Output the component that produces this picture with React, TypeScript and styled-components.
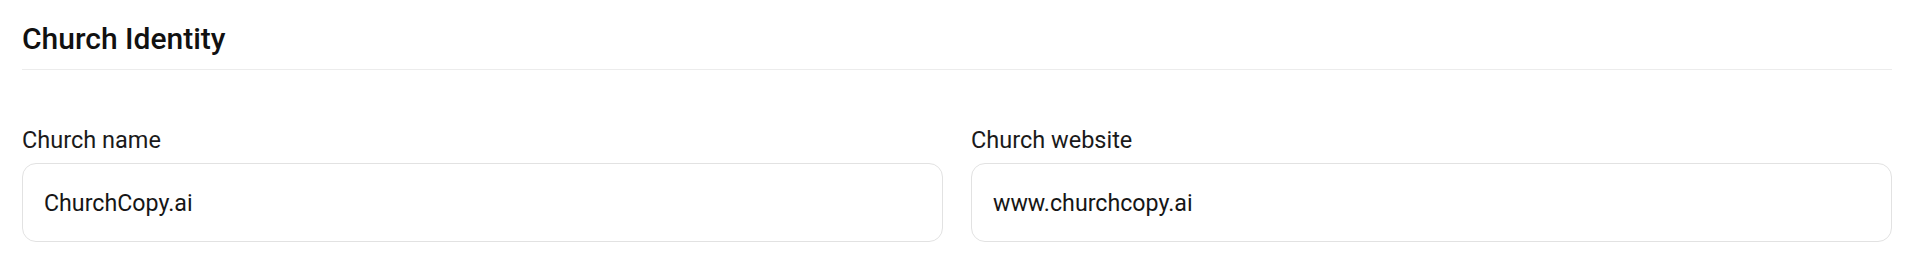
import React from 'react';
import styled, { createGlobalStyle } from 'styled-components';

const GlobalStyle = createGlobalStyle`
  body {
    margin: 0;
    background: #ffffff;
    font-family: Roboto, "Noto Sans", Arial, sans-serif;
    color: #141414;
  }
`;

const Section = styled.section`
  padding: 21px 28px 24px 22px;
`;

const SectionHeader = styled.div`
  padding-bottom: 12px;
  border-bottom: 1px solid #ececec;
`;

const SectionTitle = styled.h2`
  margin: 0;
  font-size: 30px;
  line-height: 36px;
  font-weight: 500;
  color: #111111;
`;

const FieldGrid = styled.div`
  display: grid;
  grid-template-columns: 1fr 1fr;
  column-gap: 28px;
  margin-top: 56px;
`;

const Field = styled.label`
  display: flex;
  flex-direction: column;
  gap: 9px;
`;

const FieldLabel = styled.span`
  font-size: 23.5px;
  line-height: 28px;
  font-weight: 400;
  color: #1a1a1a;
`;

const TextInput = styled.input`
  box-sizing: border-box;
  width: 100%;
  height: 79px;
  padding: 0 21px;
  border: 1px solid #e2e2e2;
  border-radius: 14px;
  background: #ffffff;
  font-family: inherit;
  font-size: 23.2px;
  color: #161616;
  outline: none;
`;

interface FieldProps {
  label: string;
  value: string;
}

const InputField: React.FC<FieldProps> = ({ label, value }) => (
  <Field>
    <FieldLabel>{label}</FieldLabel>
    <TextInput defaultValue={value} />
  </Field>
);

const App: React.FC = () => {
  return (
    <>
      <GlobalStyle />
      <Section>
        <SectionHeader>
          <SectionTitle>Church Identity</SectionTitle>
        </SectionHeader>
        <FieldGrid>
          <InputField label="Church name" value="ChurchCopy.ai" />
          <InputField label="Church website" value="www.churchcopy.ai" />
        </FieldGrid>
      </Section>
    </>
  );
};

export default App;
